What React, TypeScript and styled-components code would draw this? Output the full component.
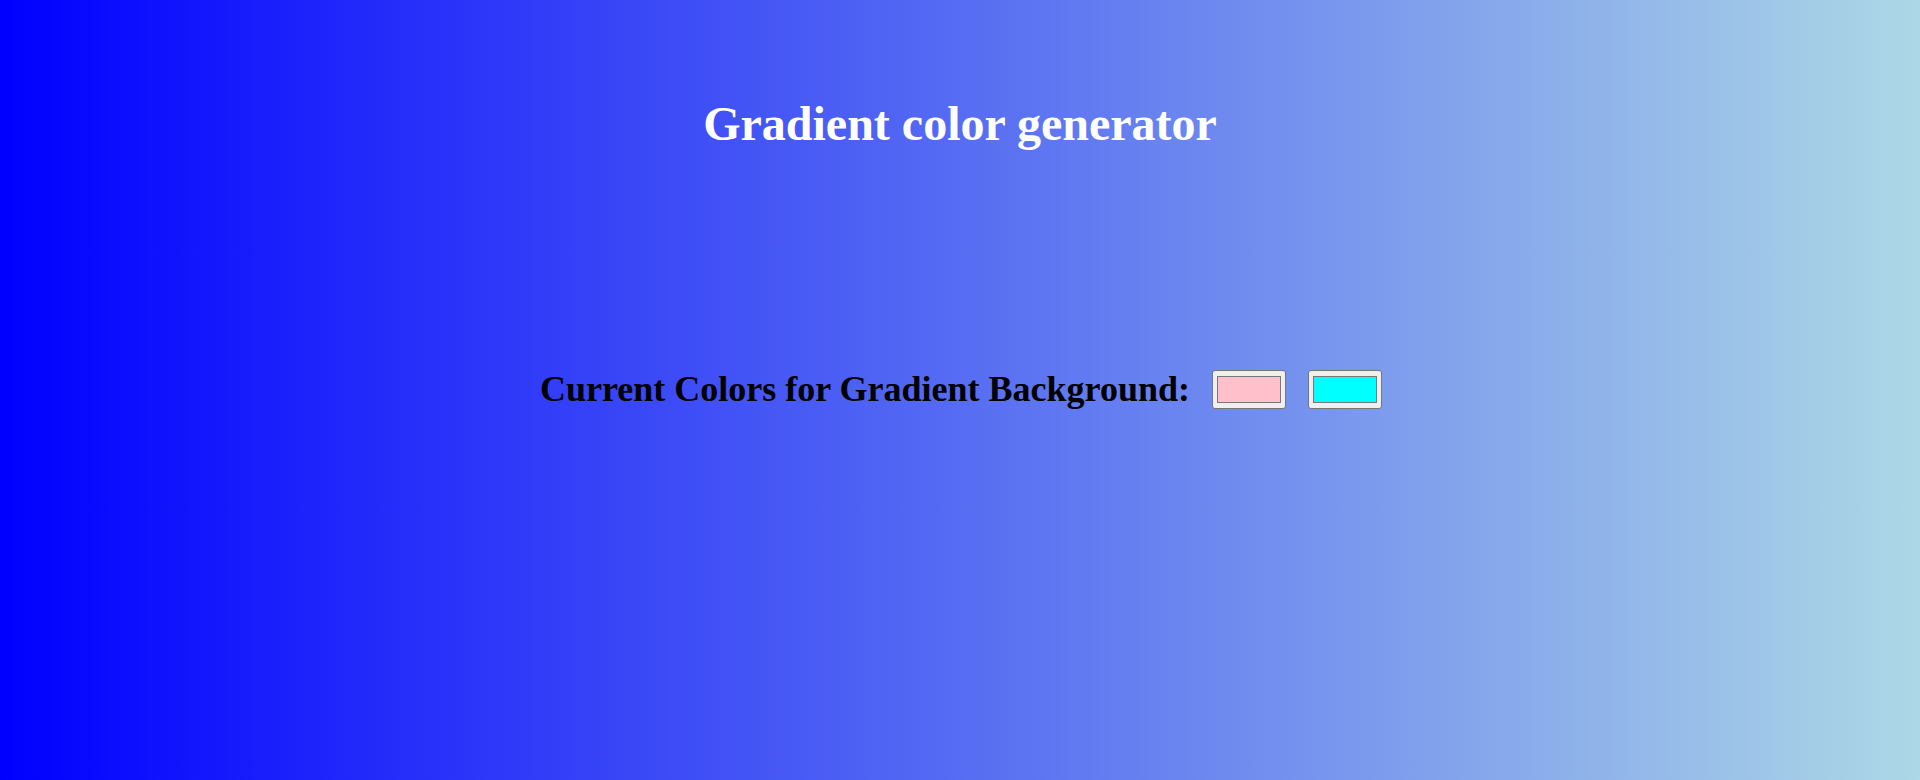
import React, { useState } from "react";
import styled, { createGlobalStyle } from "styled-components";

const GlobalStyle = createGlobalStyle`
  html, body {
    margin: 0;
    padding: 0;
    height: 100%;
  }
  body {
    font-family: "Liberation Serif", "Times New Roman", serif;
  }
`;

const Page = styled.div<{ $from: string; $to: string }>`
  min-height: 100vh;
  box-sizing: border-box;
  padding-top: 96px;
  display: flex;
  flex-direction: column;
  align-items: center;
  background: linear-gradient(to right, ${(p) => p.$from}, ${(p) => p.$to});
`;

const Title = styled.h1`
  margin: 0;
  font-family: "Liberation Serif", "Times New Roman", serif;
  font-size: 48px;
  font-weight: bold;
  color: #ffffff;
  text-align: center;
`;

const Row = styled.div`
  margin-top: 217px;
  display: flex;
  align-items: center;
  gap: 22px;
  padding-left: 2px;
`;

const Label = styled.h2`
  margin: 0;
  font-family: "Liberation Serif", "Times New Roman", serif;
  font-size: 36px;
  font-weight: bold;
  color: #000000;
`;

const ColorInput = styled.input.attrs({ type: "color" })`
  -webkit-appearance: none;
  appearance: none;
  box-sizing: border-box;
  width: 74px;
  height: 39px;
  margin: 0;
  padding: 1px 2px;
  background-color: #efefef;
  border: 1px solid #767676;
  border-radius: 3px;
  cursor: pointer;

  &::-webkit-color-swatch-wrapper {
    padding: 4px 2px;
  }
  &::-webkit-color-swatch {
    border: 1px solid #777777;
    border-radius: 0;
  }
`;

export default function App() {
  const [first, setFirst] = useState("#ffc0cb");
  const [second, setSecond] = useState("#00ffff");
  return (
    <>
      <GlobalStyle />
      <Page $from="#0000ff" $to="#add8e6">
        <Title>Gradient color generator</Title>
        <Row>
          <Label>Current Colors for Gradient Background:</Label>
          <ColorInput value={first} onChange={(e) => setFirst(e.target.value)} />
          <ColorInput value={second} onChange={(e) => setSecond(e.target.value)} />
        </Row>
      </Page>
    </>
  );
}
